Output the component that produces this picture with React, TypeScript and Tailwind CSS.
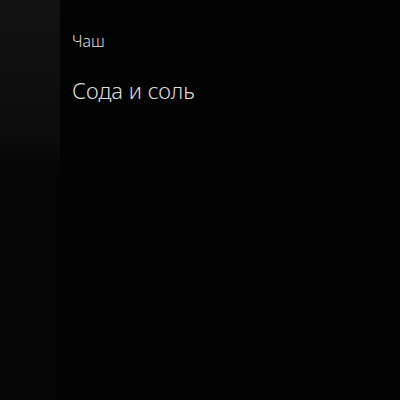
export default function App() {
  return (
    <div className="w-[400px] h-[400px] bg-[#030303] flex overflow-hidden" style={{ fontFamily: '"Noto Sans", "Open Sans", sans-serif' }}>
      {/* left rail */}
      <div className="w-[60px] h-full bg-gradient-to-b from-[#121212] via-[#0c0c0c] via-35% to-[#040404] to-44%" />

      <div className="flex-1 flex flex-col pl-[12px] pt-[31px] text-[#dcdcdc]">
        <p className="text-[16px] leading-[20px] font-light">Чаш</p>
        <h1 className="mt-[24px] text-[22px] leading-[30px] font-light">Сода и соль</h1>
      </div>
    </div>
  );
}
